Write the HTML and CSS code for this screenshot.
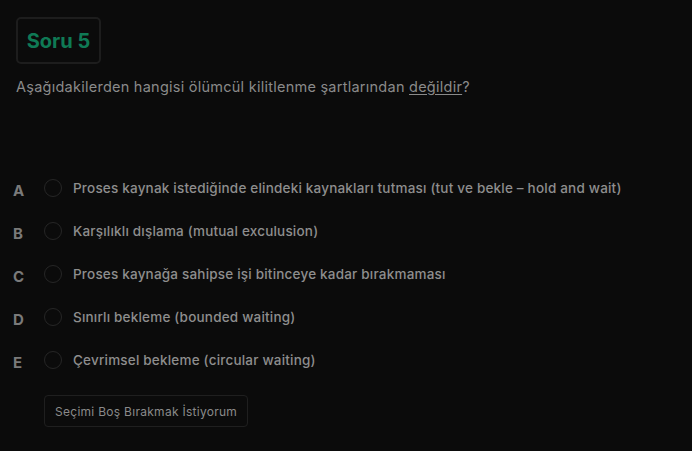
FILE: index.html
```html
<!DOCTYPE html>
<html lang="tr">
<head>
<meta charset="utf-8">
<link rel="stylesheet" href="styles.css">
</head>
<body>
<main class="quiz">
  <div class="title-box"><h1 class="title">Soru 5</h1></div>
  <p class="question">Aşağıdakilerden hangisi ölümcül kilitlenme şartlarından <u>değildir</u>?</p>
  <ul class="options">
    <li class="option"><span class="letter">A</span><span class="radio"></span><span class="text">Proses kaynak istediğinde elindeki kaynakları tutması (tut ve bekle – hold and wait)</span></li>
    <li class="option"><span class="letter">B</span><span class="radio"></span><span class="text">Karşılıklı dışlama (mutual exculusion)</span></li>
    <li class="option"><span class="letter">C</span><span class="radio"></span><span class="text">Proses kaynağa sahipse işi bitinceye kadar bırakmaması</span></li>
    <li class="option"><span class="letter">D</span><span class="radio"></span><span class="text">Sınırlı bekleme (bounded waiting)</span></li>
    <li class="option"><span class="letter">E</span><span class="radio"></span><span class="text">Çevrimsel bekleme (circular waiting)</span></li>
  </ul>
  <button class="skip">Seçimi Boş Bırakmak İstiyorum</button>
</main>
</body>
</html>
```
FILE: styles.css
```css
html, body {
  margin: 0;
  background: #0b0b0b;
}
body {
  font-family: Inter, "Open Sans", sans-serif;
  color: #8a8a8a;
  width: 692px;
  height: 451px;
  overflow: hidden;
}
.quiz {
  padding: 17px 16px 0 16px;
  display: flex;
  flex-direction: column;
  align-items: flex-start;
}
.title-box {
  width: 85px;
  height: 47px;
  box-sizing: border-box;
  border: 2px solid #1d1d1d;
  border-radius: 5px;
  display: flex;
  align-items: center;
  justify-content: center;
}
.title {
  margin: 0;
  font-size: 20px;
  font-weight: 700;
  color: #0f7a55;
}
.question {
  margin: 13px 0 0 0;
  font-size: 14.5px;
  line-height: 20px;
  color: #8a8a8a;
  letter-spacing: 0.25px;
}
.question u {
  text-underline-offset: 2px;
}
.options {
  list-style: none;
  margin: 82px 0 0 -3px;
  padding: 0;
  display: flex;
  flex-direction: column;
  gap: 25px;
}
.option {
  display: flex;
  align-items: center;
  height: 18px;
}
.letter {
  width: 31px;
  font-size: 15px;
  font-weight: 700;
  color: #7a7a7a;
  padding-top: 4px;
}
.radio {
  width: 18px;
  height: 18px;
  box-sizing: border-box;
  border: 1px solid #262626;
  border-radius: 50%;
  margin-right: 11px;
  flex: none;
}
.text {
  font-size: 13.5px;
  font-weight: 500;
  color: #8e8e8e;
  letter-spacing: 0.2px;
}
.skip {
  margin: 26px 0 0 28px;
  height: 32px;
  padding: 0 10px;
  white-space: nowrap;
  background: transparent;
  border: 1px solid #1f1f1f;
  border-radius: 4px;
  font-family: Inter, "Open Sans", sans-serif;
  font-size: 12px;
  color: #8a8a8a;
  letter-spacing: 0.28px;
}
```
